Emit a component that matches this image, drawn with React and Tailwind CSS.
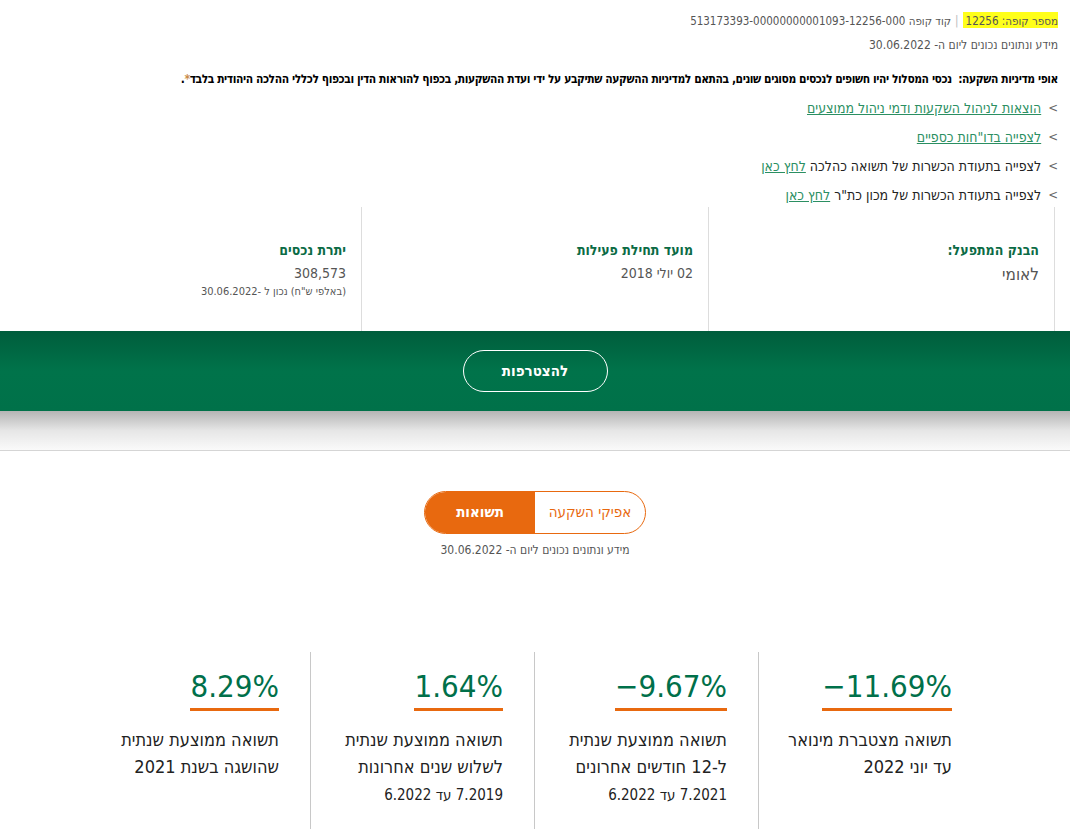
import React from 'react'

const font = { fontFamily: '"DejaVu Sans Condensed", "Liberation Sans Narrow", "Liberation Sans", sans-serif' }

const links = [
    { text: 'הוצאות לניהול השקעות ודמי ניהול ממוצעים', all: true },
    { text: 'לצפייה בדו"חות כספיים', all: true },
    { text: 'לצפייה בתעודת הכשרות של תשואה כהלכה ', link: 'לחץ כאן' },
    { text: 'לצפייה בתעודת הכשרות של מכון כת"ר ', link: 'לחץ כאן' },
]

const info = [
    { title: 'הבנק המתפעל:', value: 'לאומי', big: true },
    { title: 'מועד תחילת פעילות', value: '02 יולי 2018' },
    { title: 'יתרת נכסים', value: '308,573', note: '(באלפי ש"ח) נכון ל -30.06.2022' },
]

const stats = [
    { value: '−11.69%', lines: ['תשואה מצטברת מינואר', 'עד יוני 2022'] },
    { value: '−9.67%', lines: ['תשואה ממוצעת שנתית', 'ל-12 חודשים אחרונים'], range: '7.2021 עד 6.2022' },
    { value: '1.64%', lines: ['תשואה ממוצעת שנתית', 'לשלוש שנים אחרונות'], range: '7.2019 עד 6.2022' },
    { value: '8.29%', lines: ['תשואה ממוצעת שנתית', 'שהושגה בשנת 2021'] },
]

export default function App() {
    return (
        <div dir="rtl" className="w-[1070px] h-[829px] overflow-hidden bg-white" style={font}>
            {/* fund header */}
            <div className="pr-[12px] pl-[10px] pt-[11px]">
                <div className="text-[11.5px] leading-[20px] text-[#555]">
                    <span className="bg-[#ffff1a] pt-[2px] pl-[3px]">מספר קופה: 12256</span>
                    <span className="text-[#bbb] mx-[4px]">|</span>
                    <span>קוד קופה 513173393-00000000001093-12256-000</span>
                </div>
                <div className="mt-[4px] text-[12px] leading-[20px] text-[#555]">מידע ונתונים נכונים ליום ה- 30.06.2022</div>
                <p className="mt-[14px] text-[12px] leading-[20px] font-bold tracking-[-0.45px] text-black">
                    אופי מדיניות השקעה:&nbsp; נכסי המסלול יהיו חשופים לנכסים מסוגים שונים, בהתאם למדיניות ההשקעה שתיקבע על ידי ועדת ההשקעות, בכפוף להוראות הדין ובכפוף לכללי ההלכה היהודית בלבד<span className="text-[#c98a4a]">*</span>.
                </p>
                <ul className="mt-[9px] flex flex-col gap-[9px]">
                    {links.map((l, i) => (
                        <li key={i} className="flex items-center gap-[7px] text-[14px] leading-[20px] text-[#222]">
                            <span className="text-[#666] text-[13px]">&gt;</span>
                            {l.all ? (
                                <span className="text-[#2b8f62] underline">{l.text}</span>
                            ) : (
                                <span>{l.text}<span className="text-[#2b8f62] underline">{l.link}</span></span>
                            )}
                        </li>
                    ))}
                </ul>
            </div>

            {/* fund info */}
            <div className="flex mr-[15px] mt-[2px]">
                {info.map((c, i) => (
                    <div key={i} className={`w-[347px] h-[124px] border-l border-[#ddd] pr-[15px] pt-[33px] ${i === 0 ? 'border-r' : ''} ${i === 2 ? 'border-l-0' : ''}`}>
                        <div className="text-[14px] leading-[20px] font-bold text-[#0b6b45]">{c.title}</div>
                        <div className={`${c.big ? 'text-[17px] mt-[3px]' : 'text-[14px] mt-[2px]'} leading-[22px] text-[#555]`}>{c.value}</div>
                        {c.note && <div className="text-[11px] leading-[16px] text-[#555]">{c.note}</div>}
                    </div>
                ))}
            </div>

            {/* join band */}
            <div className="h-[80px] bg-gradient-to-b from-[#005d3c] via-[#00734a] to-[#007149] flex items-center justify-center">
                <button className="w-[145px] h-[42px] rounded-full border border-white text-white text-[15px] font-bold">להצטרפות</button>
            </div>
            <div className="h-[40px] bg-gradient-to-b from-[#b5b5b5] via-[#e6e6e6] to-[#fafafa] border-b border-[#d5d5d5]" />

            {/* tabs */}
            <div className="flex flex-col items-center pt-[40px]">
                <div className="flex w-[222px] h-[43px] rounded-full border border-[#e8690f] overflow-hidden">
                    <div className="flex-1 flex items-center justify-center text-[15px] text-[#e8690f]">אפיקי השקעה</div>
                    <div className="flex-1 flex items-center justify-center bg-[#e8690f] text-white text-[15px] font-bold">תשואות</div>
                </div>
                <div className="mt-[7px] text-[12px] leading-[18px] text-[#555]">מידע ונתונים נכונים ליום ה- 30.06.2022</div>
            </div>

            {/* returns */}
            <div className="flex justify-center mt-[93px]">
                {stats.map((s, i) => (
                    <div key={i} className={`w-[224px] h-[182px] pr-[31px] pt-[15px] ${i > 0 ? 'border-r border-[#c8c8c8]' : ''}`}>
                        <div className="inline-block border-b-[3px] border-[#e8690f] text-[31px] leading-[38px] pb-[3px] text-[#00704a]" dir="ltr">{s.value}</div>
                        <div className="mt-[15px] text-[18px] leading-[27px] text-[#222]">
                            {s.lines.map((t, j) => <div key={j}>{t}</div>)}
                        </div>
                        {s.range && <div className="text-[15px] leading-[30px] text-[#222]">{s.range}</div>}
                    </div>
                ))}
            </div>
        </div>
    )
}
